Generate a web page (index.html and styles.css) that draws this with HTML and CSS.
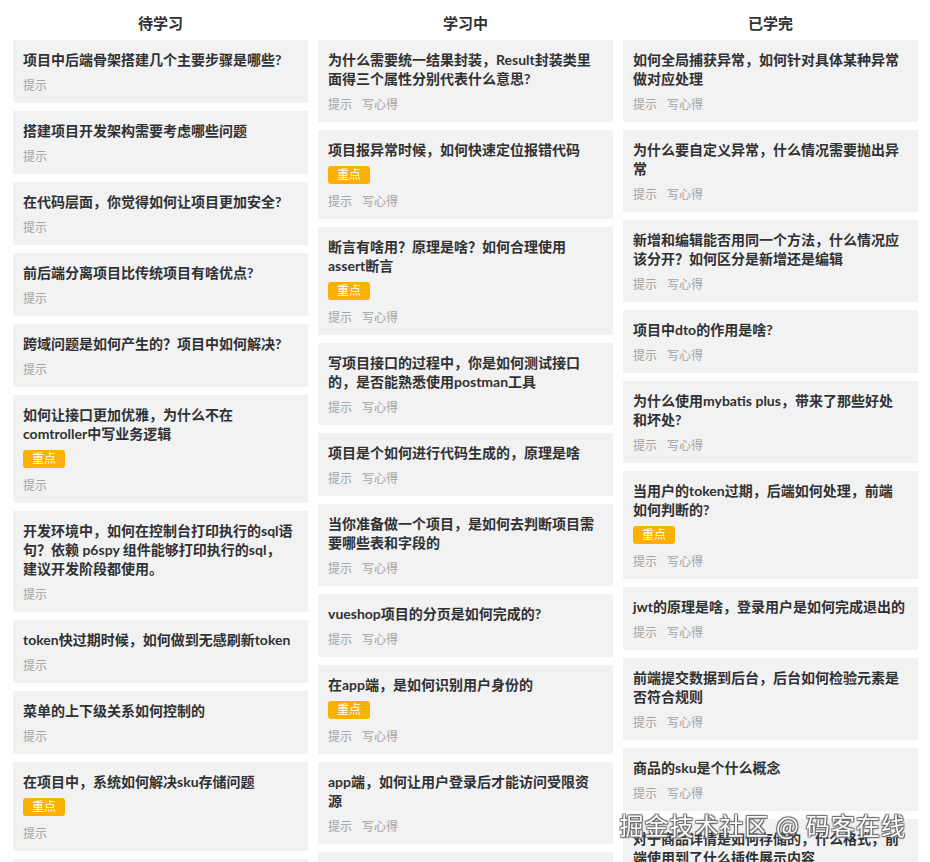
FILE: index.html
```html
<!DOCTYPE html>
<html lang="zh-CN">
<head>
<meta charset="utf-8">
<title>学习看板</title>
<link rel="stylesheet" href="styles.css">
</head>
<body>
<div class="board">
  <section class="column">
    <h2 class="column-title">待学习</h2>
    <div class="card"><div class="q">项目中后端骨架搭建几个主要步骤是哪些?</div><div class="actions"><span>提示</span></div></div>
    <div class="card"><div class="q">搭建项目开发架构需要考虑哪些问题</div><div class="actions"><span>提示</span></div></div>
    <div class="card"><div class="q">在代码层面，你觉得如何让项目更加安全?</div><div class="actions"><span>提示</span></div></div>
    <div class="card"><div class="q">前后端分离项目比传统项目有啥优点?</div><div class="actions"><span>提示</span></div></div>
    <div class="card"><div class="q">跨域问题是如何产生的？项目中如何解决?</div><div class="actions"><span>提示</span></div></div>
    <div class="card"><div class="q">如何让接口更加优雅，为什么不在comtroller中写业务逻辑</div><span class="tag">重点</span><div class="actions"><span>提示</span></div></div>
    <div class="card"><div class="q">开发环境中，如何在控制台打印执行的sql语句？依赖 p6spy 组件能够打印执行的sql，<br>建议开发阶段都使用。</div><div class="actions"><span>提示</span></div></div>
    <div class="card"><div class="q">token快过期时候，如何做到无感刷新token</div><div class="actions"><span>提示</span></div></div>
    <div class="card"><div class="q">菜单的上下级关系如何控制的</div><div class="actions"><span>提示</span></div></div>
    <div class="card"><div class="q">在项目中，系统如何解决sku存储问题</div><span class="tag">重点</span><div class="actions"><span>提示</span></div></div>
    <div class="card"><div class="q">项目中如何实现权限控制</div><div class="actions"><span>提示</span></div></div>
  </section>
  <section class="column">
    <h2 class="column-title">学习中</h2>
    <div class="card"><div class="q">为什么需要统一结果封装，Result封装类里面得三个属性分别代表什么意思?</div><div class="actions"><span>提示</span><span>写心得</span></div></div>
    <div class="card"><div class="q">项目报异常时候，如何快速定位报错代码</div><span class="tag">重点</span><div class="actions"><span>提示</span><span>写心得</span></div></div>
    <div class="card"><div class="q">断言有啥用？原理是啥？如何合理使用assert断言</div><span class="tag">重点</span><div class="actions"><span>提示</span><span>写心得</span></div></div>
    <div class="card"><div class="q">写项目接口的过程中，你是如何测试接口的，是否能熟悉使用postman工具</div><div class="actions"><span>提示</span><span>写心得</span></div></div>
    <div class="card"><div class="q">项目是个如何进行代码生成的，原理是啥</div><div class="actions"><span>提示</span><span>写心得</span></div></div>
    <div class="card"><div class="q">当你准备做一个项目，是如何去判断项目需要哪些表和字段的</div><div class="actions"><span>提示</span><span>写心得</span></div></div>
    <div class="card"><div class="q">vueshop项目的分页是如何完成的?</div><div class="actions"><span>提示</span><span>写心得</span></div></div>
    <div class="card"><div class="q">在app端，是如何识别用户身份的</div><span class="tag">重点</span><div class="actions"><span>提示</span><span>写心得</span></div></div>
    <div class="card"><div class="q">app端，如何让用户登录后才能访问受限资源</div><div class="actions"><span>提示</span><span>写心得</span></div></div>
    <div class="card"><div class="q">项目中如何进行接口文档管理</div><div class="actions"><span>提示</span><span>写心得</span></div></div>
  </section>
  <section class="column">
    <h2 class="column-title">已学完</h2>
    <div class="card"><div class="q">如何全局捕获异常，如何针对具体某种异常做对应处理</div><div class="actions"><span>提示</span><span>写心得</span></div></div>
    <div class="card"><div class="q">为什么要自定义异常，什么情况需要抛出异常</div><div class="actions"><span>提示</span><span>写心得</span></div></div>
    <div class="card"><div class="q">新增和编辑能否用同一个方法，什么情况应该分开？如何区分是新增还是编辑</div><div class="actions"><span>提示</span><span>写心得</span></div></div>
    <div class="card"><div class="q">项目中dto的作用是啥?</div><div class="actions"><span>提示</span><span>写心得</span></div></div>
    <div class="card"><div class="q">为什么使用mybatis plus，带来了那些好处和坏处?</div><div class="actions"><span>提示</span><span>写心得</span></div></div>
    <div class="card"><div class="q">当用户的token过期，后端如何处理，前端如何判断的?</div><span class="tag">重点</span><div class="actions"><span>提示</span><span>写心得</span></div></div>
    <div class="card"><div class="q">jwt的原理是啥，登录用户是如何完成退出的</div><div class="actions"><span>提示</span><span>写心得</span></div></div>
    <div class="card"><div class="q">前端提交数据到后台，后台如何检验元素是否符合规则</div><div class="actions"><span>提示</span><span>写心得</span></div></div>
    <div class="card"><div class="q">商品的sku是个什么概念</div><div class="actions"><span>提示</span><span>写心得</span></div></div>
    <div class="card"><div class="q">对于商品详情是如何存储的，什么格式，前端使用到了什么插件展示内容</div><div class="actions"><span>提示</span><span>写心得</span></div></div>
  </section>
</div>
<div class="watermark">掘金技术社区 @ 码客在线</div>
</body>
</html>
```
FILE: styles.css
```css
html, body {
  margin: 0;
  padding: 0;
  background: #ffffff;
}
body {
  font-family: Lato, "Noto Sans CJK SC", sans-serif;
  color: #303133;
}
.board {
  display: grid;
  grid-template-columns: 295px 295px 295px;
  column-gap: 10px;
  padding: 0 12px 0 13px;
  align-items: start;
}
.column {
  display: flex;
  flex-direction: column;
  gap: 8px;
}
.column-title {
  margin: 0 0 -4px 0;
  padding-top: 10px;
  height: 26px;
  line-height: 26px;
  font-size: 15px;
  font-weight: 700;
  text-align: center;
  color: #303133;
}
.card {
  background: #f2f2f2;
  padding: 10px 13px 7px 10px;
  display: flex;
  flex-direction: column;
  align-items: flex-start;
}
.q {
  font-size: 14px;
  line-height: 19px;
  font-weight: 700;
  color: #303133;
}
.tag {
  margin: 7px 0 0;
  height: 18px;
  line-height: 18px;
  padding: 0 9px;
  background: #fbb100;
  color: #ffffff;
  font-size: 12px;
  border-radius: 3px;
}
.tag + .actions {
  margin-top: 8px;
}
.actions {
  margin-top: 7px;
  display: flex;
  gap: 10px;
  font-size: 12px;
  line-height: 20px;
  color: #a3a3a3;
}
.watermark {
  position: fixed;
  right: 24px;
  bottom: 21px;
  font-size: 24px;
  line-height: 32px;
  color: #ffffff;
  letter-spacing: 1px;
  text-shadow: 0 0 1px #555, 1px 1px 1px #666, -1px -1px 1px #777, 1px -1px 1px #777, -1px 1px 1px #777;
  font-family: "Noto Sans CJK SC", sans-serif;
}
```
